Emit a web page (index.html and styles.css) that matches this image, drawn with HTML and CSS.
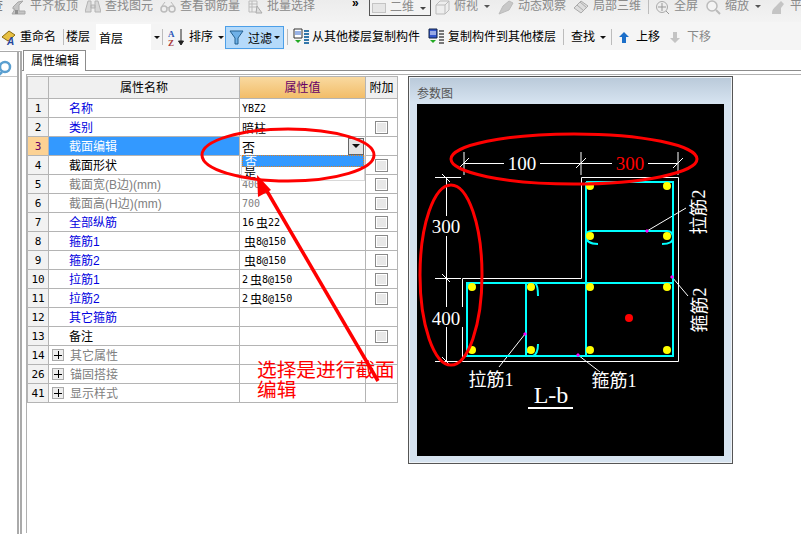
FILE: index.html
```html
<!DOCTYPE html>
<html lang="zh">
<head>
<meta charset="utf-8">
<title>属性编辑</title>
<link rel="stylesheet" href="styles.css">
</head>
<body>
<div class="tb tb1">
  <span class="clip">查</span>
  <span class="it w1"><svg class="ic" width="15" height="15" viewBox="0 0 15 15"><path d="M1 14h13v-3H8V5l4-4-5 1-5 5v2h2z" fill="#c4c4c4" stroke="#a8a8a8"/><path d="M4 14v-4h3v4z" fill="#8f8f8f"/></svg>平齐板顶</span>
  <span class="it w2"><svg class="ic" width="16" height="14" viewBox="0 0 16 14"><path d="M3 1h3v11H0zM10 1h3l3 11h-6zM6 5h4v3H6z" fill="#d8d8d8" stroke="#b4b4b4"/></svg>查找图元</span>
  <span class="it w2"><svg class="ic" width="16" height="14" viewBox="0 0 16 14"><circle cx="4" cy="9" r="3" fill="none" stroke="#bbb" stroke-width="1.500"/><circle cx="12" cy="9" r="3" fill="none" stroke="#bbb" stroke-width="1.500"/><path d="M7 8q1-1 2 0M2 6l3-4M14 6l-3-4" stroke="#bbb" fill="none"/></svg>查看钢筋量</span>
  <span class="it w3"><svg class="ic" width="15" height="14" viewBox="0 0 15 14"><path d="M1 1h8v11H1zM1 4h8M1 7h8M4 1v11" fill="#eee" stroke="#bbb"/><path d="M9 6l5 7H8z" fill="#ddd" stroke="#aaa"/></svg>批量选择</span>
  <span class="more">»</span>
  <span class="viewbox"><i class="vb-sq"></i><span class="vb-t">二维</span><i class="caret"></i></span>
  <span class="it w4"><svg class="ic" width="15" height="15" viewBox="0 0 15 15"><path d="M1 5l4-4h9v9l-4 4H1zM1 5h9v9M10 5l4-4" fill="#eee" stroke="#bbb"/></svg>俯视<i class="caret lg"></i></span>
  <span class="it w5"><svg class="ic" width="16" height="15" viewBox="0 0 16 15"><path d="M1 14L5 6l6-5 4 2-4 7z" fill="#c8c8c8" stroke="#bbb"/></svg>动态观察</span>
  <span class="it w6"><svg class="ic" width="16" height="14" viewBox="0 0 16 14"><path d="M1 8l7-7 7 5-7 7zM4 5l7 6M7 2l7 6" fill="#ddd" stroke="#aaa"/></svg>局部三维</span>
  <i class="sep sep1"></i>
  <span class="it w7"><svg class="ic" width="15" height="15" viewBox="0 0 15 15"><circle cx="7" cy="7" r="5.500" fill="#eee" stroke="#aaa"/><path d="M7 3v8M3 7h8M11 11l3 3" stroke="#999" fill="none"/></svg>全屏</span>
  <span class="it w8"><svg class="ic" width="16" height="15" viewBox="0 0 16 15"><circle cx="7" cy="6" r="5" fill="#f4f4f4" stroke="#bbb" stroke-width="1.500"/><path d="M11 10l4 4" stroke="#bbb" stroke-width="2"/></svg>缩放<i class="caret lg"></i></span>
  <span class="it w9"><svg class="ic" width="16" height="15" viewBox="0 0 16 15"><path d="M2 14c0-6 3-6 5-9l4-4 3 3-3 4v6z" fill="#c4c4c4"/></svg>平</span>
</div>
<div class="tb tb2">
  <svg class="b-ic b0" width="16" height="17" viewBox="0 0 16 17"><path d="M1 8l7-6 6 4-7 6z" fill="#e8c040" stroke="#8a6a10"/><text x="6" y="16" class="ic-a">A</text></svg>
  <span class="t b1">重命名</span><i class="sep s2"></i>
  <span class="t b2">楼层</span>
  <span class="combo">首层<i class="combo-btn"><i class="caret"></i></i></span><i class="sep s3"></i>
  <svg class="b-ic b4" width="18" height="19" viewBox="0 0 18 19"><text x="0" y="9" class="ic-az blue">A</text><text x="0" y="18" class="ic-az redt">Z</text><path d="M13 1v15M10.500 13l2.500 4 2.500-4z" stroke="#222" fill="#222"/></svg>
  <span class="t b5">排序<i class="caret"></i></span>
  <span class="filter"><svg width="15" height="15" viewBox="0 0 15 15"><path d="M1 1h13L9 8v6H6V8z" fill="#6fb1e8" stroke="#24608f"/></svg>过滤<i class="caret"></i></span><i class="sep s6"></i>
  <svg class="b-ic b7" width="17" height="18" viewBox="0 0 17 18"><path d="M1 1h8v9H1z" fill="#fff" stroke="#333"/><path d="M2 4h6M2 6h6" stroke="#36c"/><path d="M2 12l3 3 3-3z" fill="#2a2"/><path d="M11 3h5M11 6h5M11 9h5M11 12h5M11 15h5" stroke="#37a" stroke-width="2"/></svg>
  <span class="t b8">从其他楼层复制构件</span>
  <svg class="b-ic b9" width="17" height="18" viewBox="0 0 17 18"><path d="M1 1h8v9H1z" fill="#35c" stroke="#124"/><path d="M2 4h6M2 6h6" stroke="#fff"/><path d="M2 12l3 3 3-3z" fill="#2a2"/><path d="M11 3h5M11 6h5M11 9h5M11 12h5M11 15h5" stroke="#777" stroke-width="2"/></svg>
  <span class="t b10">复制构件到其他楼层</span><i class="sep s11"></i>
  <span class="t b12">查找<i class="caret"></i></span><i class="sep s13"></i>
  <svg class="b-ic b14" width="10" height="11" viewBox="0 0 10 11"><path d="M5 0l5 5H7v6H3V5H0z" fill="#1c6fc9"/></svg>
  <span class="t b15">上移</span>
  <svg class="b-ic b16" width="10" height="11" viewBox="0 0 10 11"><path d="M3 0h4v6h3l-5 5-5-5h3z" fill="#c4c4c4"/></svg>
  <span class="t b17 off">下移</span>
</div>
<div class="main">
  <aside class="side">
    <div class="search"><svg width="14" height="16" viewBox="0 0 14 16"><circle cx="6" cy="7" r="5" fill="none" stroke="#5a9fd0" stroke-width="2.500"/><path d="M3 12l-3 3" stroke="#5a9fd0" stroke-width="2.500"/></svg></div>
  </aside>
  <div class="content">
    <div class="tabbar"><span class="tab">属性编辑</span></div>
    <div class="body">
      <div class="grid">
        <div class="c hd"></div><div class="c hd ctr">属性名称</div><div class="c hd hv ctr">属性值</div><div class="c hd ctr">附加</div>

        <div class="c n">1</div><div class="c nm lnk">名称</div><div class="c v">YBZ2</div><div class="c"></div>
        <div class="c n">2</div><div class="c nm lnk">类别</div><div class="c v cj">暗柱</div><div class="c ck"><i></i></div>
        <div class="c n sel">3</div><div class="c nm act">截面编辑</div><div class="c v edit">否<i class="ed-btn"><i class="caret"></i></i></div><div class="c"></div>
        <div class="c n">4</div><div class="c nm">截面形状</div><div class="c v"></div><div class="c ck"><i></i></div>
        <div class="c n">5</div><div class="c nm gr">截面宽(B边)(mm)</div><div class="c v gr">400</div><div class="c ck"><i></i></div>
        <div class="c n">6</div><div class="c nm gr">截面高(H边)(mm)</div><div class="c v gr">700</div><div class="c ck"><i></i></div>
        <div class="c n">7</div><div class="c nm lnk">全部纵筋</div><div class="c v">16<span class="rb">虫</span>22</div><div class="c ck"><i></i></div>
        <div class="c n">8</div><div class="c nm lnk">箍筋1</div><div class="c v"><span class="rb">虫</span>8@150</div><div class="c ck"><i></i></div>
        <div class="c n">9</div><div class="c nm lnk">箍筋2</div><div class="c v"><span class="rb">虫</span>8@150</div><div class="c ck"><i></i></div>
        <div class="c n">10</div><div class="c nm lnk">拉筋1</div><div class="c v">2<span class="rb">虫</span>8@150</div><div class="c ck"><i></i></div>
        <div class="c n">11</div><div class="c nm lnk">拉筋2</div><div class="c v">2<span class="rb">虫</span>8@150</div><div class="c ck"><i></i></div>
        <div class="c n">12</div><div class="c nm lnk">其它箍筋</div><div class="c v"></div><div class="c"></div>
        <div class="c n">13</div><div class="c nm">备注</div><div class="c v"></div><div class="c ck"><i></i></div>
        <div class="c n">14</div><div class="c nm grp gr"><b class="plus"></b>其它属性</div><div class="c v"></div><div class="c"></div>
        <div class="c n">26</div><div class="c nm grp gr"><b class="plus"></b>锚固搭接</div><div class="c v"></div><div class="c"></div>
        <div class="c n">41</div><div class="c nm grp gr"><b class="plus"></b>显示样式</div><div class="c v"></div><div class="c"></div>
      </div>
      <section class="panel">
        <div class="panel-t">参数图</div>
        <svg class="cad" width="307" height="352" viewBox="417 104 307 352">
          <g fill="none" stroke="#fff">
            <path d="M581.500 177.500H678.500V361.500H462.500V278.500H581.500Z"/>
            <path d="M464 163.500H678M464 152V175M581 152V175M678 152V175M459 168l10-10M576 168l10-10M673 168l10-10"/>
            <path d="M446.500 177V361M435 177.500H461M435 278.500H461M435 361.500H461M442 174l8 8M442 274l8 8M442 357l8 8"/>
            <path d="M647 231L686 208M672 277L688 296M525 334L499 367M578 355L600 372"/>
          </g>
          <g fill="none" stroke="#0ff" stroke-width="2">
            <path d="M586 182H673V356H467V283H673M586 182V356"/>
            <path d="M526 356V283H535Q538 285 538 296M533 356Q538 354 538 344M526 352H531"/>
            <path d="M598 244Q586 244 586 236Q586 231 592 231H667Q673 231 673 238Q673 244 662 244"/>
            <path d="M467 288Q467 283 472 283"/>
          </g>
          <g fill="#ff0">
            <circle cx="590" cy="186" r="4"/><circle cx="667" cy="186" r="4"/><circle cx="590" cy="236" r="4"/><circle cx="667" cy="236" r="4"/>
            <circle cx="472" cy="287" r="4"/><circle cx="531" cy="287" r="4"/><circle cx="590" cy="287" r="4"/><circle cx="667" cy="287" r="4"/>
            <circle cx="472" cy="350" r="4"/><circle cx="531" cy="350" r="4"/><circle cx="590" cy="350" r="4"/><circle cx="667" cy="350" r="4"/>
          </g>
          <circle cx="629" cy="318" r="4" fill="#f00"/>
          <g fill="#f0f">
            <path d="M647 229l2 2-2 2-2-2zM672 275l2 2-2 2-2-2zM525 332l2 2-2 2-2-2zM578 353l2 2-2 2-2-2z"/>
          </g>
          <rect x="504" y="153" width="36" height="20" fill="#000"/>
          <rect x="612" y="153" width="36" height="20" fill="#000"/>
          <rect x="430" y="216" width="34" height="20" fill="#000"/>
          <rect x="430" y="307" width="34" height="20" fill="#000"/>
          <g class="cad-t">
            <text x="522" y="170">100</text>
            <text x="630" y="170" class="cad-red">300</text>
            <text x="446" y="233">300</text>
            <text x="446" y="325">400</text>
            <text x="491" y="386" class="cad-s">拉筋1</text>
            <text x="614" y="387" class="cad-s">箍筋1</text>
            <text x="551" y="403" class="cad-l">L-b</text>
            <text transform="translate(705 212) rotate(-90)" class="cad-s">拉筋2</text>
            <text transform="translate(706 310) rotate(-90)" class="cad-s">箍筋2</text>
          </g>
          <path d="M528 408H573" stroke="#fff" stroke-width="2"/>
        </svg>
      </section>
    </div>
  </div>
</div>
<div class="pop"><div class="pop-a">否</div><div class="pop-b">是</div></div>
<svg class="ink" width="801" height="534" viewBox="0 0 801 534">
  <g fill="none" stroke="#f00" stroke-width="3">
    <ellipse cx="288" cy="155" rx="86" ry="26"/>
    <ellipse cx="574" cy="159" rx="123" ry="25"/>
    <ellipse cx="451" cy="275" rx="31" ry="90"/>
    <path d="M378 381L264 186" stroke-width="3.500"/>
  </g>
  <path d="M257 175L271 190L258 197Z" fill="#f00"/>
</svg>
<div class="note">选择是进行截面<br>编辑</div>
</body>
</html>
```
FILE: styles.css
```css
* { box-sizing: border-box; }
html, body { margin: 0; padding: 0; }
body {
  width: 801px; height: 534px; overflow: hidden; position: relative; background: #fff;
  font-family: "Liberation Sans", "Noto Sans CJK SC", sans-serif; font-size: 12px; color: #000;
}
i, b { display: block; font-style: normal; }
.caret { display: inline-block; width: 0; height: 0; border: 3px solid transparent; border-top: 3px solid #111; border-bottom: 0; vertical-align: middle; margin-left: 5px; }
.sep { flex: none; width: 1px; height: 16px; background: #bcbcbc; }

.tb { display: flex; align-items: center; overflow: hidden; }
.tb1 { height: 22px; background: linear-gradient(#ececec, #f3f3f3); color: #8a8a8a; align-items: flex-start; }
.clip { flex: none; width: 3px; overflow: hidden; line-height: 12px; direction: rtl; color: #666; }
.it { display: flex; align-items: flex-start; flex: none; line-height: 12px; white-space: nowrap; }
.ic { flex: none; margin-right: 4px; }
.it .caret.lg { margin: 5px 0 0 6px; border-top-color: #555; }
.w1 { margin-left: 8px; width: 74px; }
.w2 { width: 75px; }
.w2 + .w2 { width: 88px; }
.w3 { width: 104px; }
.more { flex: none; width: 17px; color: #000; font-weight: bold; line-height: 6px; }
.viewbox { flex: none; width: 62px; height: 17px; margin: -1px 4px 0 0; border: 1px solid #555; background: #f3f3f3; display: flex; align-items: flex-start; padding: 1px 0 0 2px; line-height: 12px; color: #8a8a8a; }
.vb-sq { flex: none; width: 14px; height: 10px; margin: 2px 4px 0 0; background: #e6e6e6; border: 1px solid #c4c4c4; }
.vb-t { flex: none; white-space: nowrap; }
.viewbox .caret { flex: none; margin: 6px 0 0 6px; border-top-color: #444; }
.w4 { width: 63px; }
.w5 { width: 75px; }
.w6 { width: 75px; }
.sep1 { height: 14px; margin-right: 6px; }
.w7 { width: 50px; }
.w8 { width: 65px; }
.w9 { width: 40px; }

.tb2 { height: 28px; background: #f5f5f5; padding-top: 2px; }
.t { flex: none; font-size: 12px; line-height: 14px; white-space: nowrap; display: flex; align-items: center; }
.b-ic { flex: none; }
.ic-a { font: italic bold 10px "Liberation Sans", sans-serif; fill: #25459a; }
.ic-az { font: bold 9px "Liberation Serif", serif; }
.blue { fill: #2a56b8; }
.redt { fill: #a83a3a; }
.b0 { margin-left: 1px; }
.b1 { margin-left: 3px; width: 43px; }
.b2 { margin-left: 2px; width: 30px; }
.combo { flex: none; width: 66px; height: 26px; background: #fff; display: flex; align-items: center; justify-content: space-between; padding-left: 3px; }
.combo-btn { width: 11px; height: 100%; background: #f4f4f4; display: flex; align-items: center; justify-content: center; }
.combo-btn .caret { margin: 0; }
.b4 { margin-left: 5px; }
.b5 { margin-left: 3px; width: 36px; }
.filter { flex: none; width: 59px; height: 23px; background: #b5dafa; border: 1px solid #4c9fe8; display: flex; align-items: center; padding-left: 3px; gap: 4px; }
.filter .caret { margin-left: -2px; }
.s6 { margin-left: 3px; }
.b7 { margin-left: 5px; }
.b8 { margin-left: 2px; width: 116px; }
.b10 { margin-left: 3px; width: 115px; }
.b12 { margin-left: 7px; width: 40px; }
.b14 { margin-left: 7px; }
.b15 { margin-left: 7px; width: 34px; }
.b17 { margin-left: 7px; }
.off { color: #888; }

.main { display: flex; height: 484px; }
.side { flex: none; width: 22px; border-right: 5px double #aaa; border-top: 1px solid #aaa; margin-top: 1px; }
.search { padding: 8px 0 0 0; height: 25px; margin-left: -1px; border-bottom: 1px solid #c8c8c8; }
.content { flex: 1; min-width: 0; }
.tabbar { height: 21px; border-bottom: 1px solid #8c8c8c; padding-left: 1px; display: flex; }
.tab { width: 63px; height: 21px; border: 1px solid #8c8c8c; border-bottom: 0; background: #fff; padding: 3px 0 0 7px; line-height: 14px; }
.body { display: flex; align-items: flex-start; margin: 3px 0 0 4px; border-top: 1px solid #b0b0b0; border-left: 1px solid #b0b0b0; padding: 1px 0 0 0; height: 459px; }
.grid { flex: none; display: grid; grid-template-columns: 21px 191px 126px 32px; grid-auto-rows: 19px; grid-template-rows: 22px; border-top: 1px solid #b4b4b4; border-left: 1px solid #b4b4b4; width: 371px; }
.c { border-right: 1px solid #b4b4b4; border-bottom: 1px solid #b4b4b4; display: flex; align-items: center; line-height: 14px; white-space: nowrap; overflow: hidden; }
.hd { background: #f0f0f0; }
.ctr { justify-content: center; }
.hv { background: linear-gradient(#f9d9a0, #f2bd68); color: #660066; }
.n { background: #f2f2f2; justify-content: center; font: 11px "DejaVu Sans Mono", "Liberation Mono", monospace; }
.nm { padding: 2px 0 0 20px; }
.lnk { color: #0000e0; }
.gr { color: #808080; }
.act { background: #3399ff; color: #fff; }
.sel { background: #fcd294; color: #660066; }
.v { padding-left: 2px; font: 10px "DejaVu Sans Mono", "Liberation Mono", "Noto Sans CJK SC", monospace; }
.rb { flex: none; font: 12px "Noto Sans CJK SC", sans-serif; margin-left: 2px; }
.cj { font: 12px "Noto Sans CJK SC", sans-serif; }
.edit { padding-left: 2px; font: 13px "Noto Sans CJK SC", sans-serif; justify-content: space-between; padding-right: 1px; align-items: center; }
.ed-btn { width: 16px; height: 17px; background: #e4e4e4; border: 1px solid #666; display: flex; align-items: center; justify-content: center; }
.ed-btn .caret { margin: 0; border-width: 4px; border-top-color: #111; border-bottom: 0; }
.ck { justify-content: center; }
.ck i { width: 13px; height: 13px; border: 1px solid #8a8a8a; background: #e8e8e8; box-shadow: inset 0 0 0 1px #fff; }
.grp { padding-left: 3px; gap: 6px; }
.plus { width: 12px; height: 12px; margin-top: -2px; border: 1px solid #aaa; background: linear-gradient(#000,#000) center/8px 1px no-repeat, linear-gradient(#000,#000) center/1px 8px no-repeat, #eee; }

.panel { flex: none; margin-left: 10px; width: 325px; height: 388px; border: 1px solid #555; background: linear-gradient(#b9c9d9, #d6e3f0 26px); padding: 9px 8px 0 8px; box-shadow: inset 0 0 0 1px #eef2f6; }
.panel-t { color: #555; line-height: 16px; height: 18px; }
.cad { display: block; background: #000; }
.cad-t text { font: 19px "Liberation Serif", serif; fill: #fff; text-anchor: middle; }
.cad-t text.cad-red { fill: #f00; }
.cad-t text.cad-s { font-size: 18px; font-family: "Liberation Serif", "Noto Sans CJK SC", serif; }
.cad-t text.cad-l { font-size: 24px; }

.pop { position: absolute; left: 241px; top: 155px; width: 124px; height: 26px; background: #fff; border: 1px solid #d8d8d8; border-top: 0; font-size: 12px; line-height: 13px; }
.pop-a { height: 12px; background: #3399ff; color: #fff; border: 1px dotted #e08020; overflow: hidden; padding-left: 2px; }
.pop-b { height: 13px; overflow: hidden; padding-left: 2px; }
.ink { position: absolute; left: 0; top: 0; pointer-events: none; }
.note { position: absolute; left: 257px; top: 360px; color: #f00; font-size: 19.700px; line-height: 20px; white-space: nowrap; }
```
